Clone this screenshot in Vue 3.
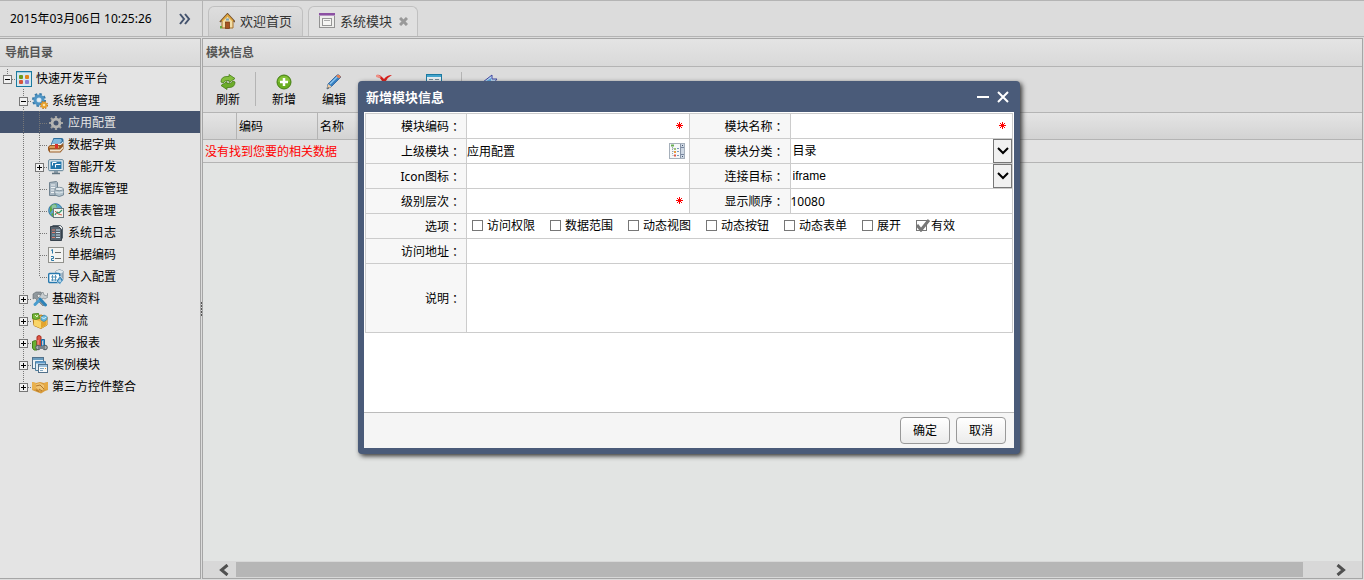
<script setup>
import { ref, reactive } from 'vue'

const now = ref('2015年03月06日 10:25:26')
const activeNode = ref('应用配置')

const nodes = [
  { label: '快速开发平台', level: 0, toggle: 'minus', icon: 'platform' },
  { label: '系统管理', level: 1, toggle: 'minus', icon: 'gears' },
  { label: '应用配置', level: 2, icon: 'gear' },
  { label: '数据字典', level: 2, icon: 'books' },
  { label: '智能开发', level: 2, toggle: 'plus', icon: 'monitor' },
  { label: '数据库管理', level: 2, icon: 'server' },
  { label: '报表管理', level: 2, icon: 'globe' },
  { label: '系统日志', level: 2, icon: 'log' },
  { label: '单据编码', level: 2, icon: 'numbers' },
  { label: '导入配置', level: 2, icon: 'importer', last: true },
  { label: '基础资料', level: 1, toggle: 'plus', icon: 'tools' },
  { label: '工作流', level: 1, toggle: 'plus', icon: 'box' },
  { label: '业务报表', level: 1, toggle: 'plus', icon: 'chart' },
  { label: '案例模块', level: 1, toggle: 'plus', icon: 'windows' },
  { label: '第三方控件整合', level: 1, toggle: 'plus', icon: 'hands', last: true },
]

const tools = [
  { label: '刷新', icon: 'refresh', split: true },
  { label: '新增', icon: 'add' },
  { label: '编辑', icon: 'pencil' },
  { title: '删除', icon: 'remove' },
  { title: '详细', icon: 'detail', split: true },
  { title: '离开', icon: 'back' },
]

const form = reactive({
  code: '',
  name: '',
  parent: '应用配置',
  category: '目录',
  icon: '',
  target: 'iframe',
  level: '',
  sort: '10080',
  url: '',
  remark: '',
})

const options = reactive([
  { label: '访问权限', checked: false },
  { label: '数据范围', checked: false },
  { label: '动态视图', checked: false },
  { label: '动态按钮', checked: false },
  { label: '动态表单', checked: false },
  { label: '展开', checked: false },
  { label: '有效', checked: true },
])

const icons = {
  platform: `<rect x=".5" y=".5" width="15" height="15" fill="#d6e8ef" stroke="#1a7a9f"/><path d="M1 1.500h14" stroke="#9fcbdc"/>
    <rect x="3" y="4" width="4" height="4" rx="1" fill="#6b9a1c"/><rect x="9" y="4" width="4" height="4" rx="1" fill="#e0841c"/>
    <rect x="3" y="9" width="4" height="4" rx="1" fill="#d8553a"/><rect x="9" y="9" width="4" height="4" rx="1" fill="#8a7fd6"/>`,
  gears: `<circle cx="7" cy="7" r="5.8" fill="none" stroke="#3579a8" stroke-width="2.4" stroke-dasharray="2.4 2.1"/>
    <circle cx="7" cy="7" r="4" fill="#c4dcec" stroke="#4e94c4" stroke-width="3"/><circle cx="7" cy="7" r="1.8" fill="#e6eef2"/>
    <circle cx="12" cy="12" r="3.3" fill="none" stroke="#c07a1c" stroke-width="1.6" stroke-dasharray="1.4 1.2"/><circle cx="12" cy="12" r="2.2" fill="#fbe3a8" stroke="#e8a02c" stroke-width="1.8"/>`,
  gear: `<path d="M8 1v14M1 8h14M3 3l10 10M13 3L3 13" stroke="#a2a2a0" stroke-width="2.2"/><circle cx="8" cy="8" r="3.9" fill="#44536e" stroke="#b4b4b2" stroke-width="2.8"/>`,
  books: `<path d="M5.5 1h8q2 0 2 2v3l-3 3h-8L3 7z" fill="#2d6d9c"/><path d="M6 2h7l1 2-2 2H4z" fill="#80b8dd"/><path d="M4 6.5h9l2-2v1.500l-2 2H4z" fill="#f4f4f4"/>
    <path d="M2 8h11l2.500-2v6l-3 3.500H1.500L0 13V10z" fill="#9a5c26"/><path d="M2 9h9v2H1z" fill="#d99b56"/><path d="M2 12.500h10l3-3v2l-3 3H2z" fill="#f1e5d1"/><path d="M7 7h3v5l-1.500-1L7 12z" fill="#d9302c"/>`,
  monitor: `<rect x=".7" y=".7" width="14.600" height="11" rx="1" fill="#e9f1f5" stroke="#5b7e93"/><rect x="2.500" y="2.500" width="11" height="7.500" fill="#2377ac"/>
    <path d="M4.500 6.500v-3h4M7.500 8.500v-3h5" fill="none" stroke="#fff"/><path d="M6 12h4v2H6z" fill="#8a9ca8"/><path d="M4 14.500h8" stroke="#61737f" stroke-width="1.500"/>`,
  server: `<path d="M1.500 1.500l7-1 1 1v13h-8z" fill="#a9b7c2" stroke="#718390"/><path d="M3 4h4M3 6.500h4M3 9h4M3 11.500h3" stroke="#edf1f3"/>
    <path d="M7 8v6q4 3 8.500 0V8z" fill="#b2c2cc" stroke="#798b98"/><ellipse cx="11.200" cy="8" rx="4.200" ry="1.700" fill="#e3eaee" stroke="#8798a3"/><path d="M7 11q4 2 8.500 0" fill="none" stroke="#dce4e9"/>`,
  globe: `<circle cx="7.500" cy="7.500" r="6.800" fill="#5aa7cf" stroke="#32769d"/><path d="M2 4Q4 1 8 1l1 3-4 2-3 4zM5 10l2 4H5l-2-3z" fill="#5fa83d"/><circle cx="6" cy="4" r="2.500" fill="#a9d7e8" opacity=".6"/>
    <rect x="5.500" y="5.500" width="10" height="9" fill="#f2f4ee" stroke="#67797f"/><path d="M7 12l2-3 2 1 3-3" fill="none" stroke="#31986a" stroke-width="1.300"/><path d="M7 8l3 3 4 1" fill="none" stroke="#d35a48"/>`,
  log: `<path d="M2.500 1.500h8l3 3v11h-11z" fill="#58646f" stroke="#36414c"/><path d="M4.500.5h8l2 2v11" fill="none" stroke="#54616b"/><path d="M8 5h4M8 7.500h4M8 10h4M8 12.500h4" stroke="#c8e0ef"/>
    <path d="M4 5h3M4 7.500h3M4 12.500h3" stroke="#d98074"/><path d="M4 10h3" stroke="#80b6d0"/>`,
  numbers: `<rect x=".5" y=".5" width="15" height="15" fill="#f3f3f1" stroke="#92928d"/><path d="M3 3.500l1.500-1v4M3 9.500h2.500v2H3.500v2H6" fill="none" stroke="#2c79a6"/><path d="M7 5.500h6M7 11.500h6" stroke="#696965"/>`,
  importer: `<path d="M8 2v9h7V2q-3.500-2.500-7 0z" fill="#a7bccb" stroke="#74899a"/><ellipse cx="11.500" cy="2.500" rx="3.500" ry="1.500" fill="#e2eaee"/>
    <rect x=".7" y="4.500" width="11" height="9" rx="1" fill="#fff" stroke="#2779ae" stroke-width="1.400"/><path d="M3 8h6M3 11h6M4.500 6v6M7.500 6v6" stroke="#5695bb"/><path d="M8 12l4-5 3.500 4-3.500 4.500z" fill="#2f7fb3" stroke="#fff" stroke-width=".6"/><path d="M10 12h3.500M12 9.500v4" stroke="#d9edf8"/>`,
  tools: `<path d="M1 3l3-2h5l1 2-2 1-2-1-1 2 8 8-2 2-8-8-2 1z" fill="#90989d" stroke="#5e676c" stroke-width=".6"/><path d="M11 1l1 3 3 1 1-3v4l-3 2-2-1-4 4-3-1 5-6V3z" fill="#c8ced1" stroke="#727b80" stroke-width=".6"/>
    <path d="M8 8l5.500 6" stroke="#2e83b8" stroke-width="3" stroke-linecap="round"/><path d="M6.500 10L3 13.500" stroke="#4a9dce" stroke-width="3" stroke-linecap="round"/>`,
  box: `<path d="M1 5l8-3 6 2v8l-6 3.500-7-3z" fill="#edb545" stroke="#b57916"/><path d="M2 6l7 3 6-4v7l-6 3.500-7-3z" fill="#f9d568"/><path d="M9 9v6l5.500-3V6z" fill="#e3a42e"/>
    <path d="M.5 1l6-.5 1 5-4 1-3-1z" fill="#76b637" stroke="#4f8921"/><path d="M3 2l2 2 1-2" fill="none" stroke="#e8f5d2"/><path d="M9 4l3-2 3 1.500v3l-3 2-3-1.500z" fill="#69b8dc" stroke="#3187b3" stroke-width=".7"/><path d="M9.500 4.500l2.500 1 2.500-1.500" fill="none" stroke="#d6f1fc"/>`,
  chart: `<path d="M.5 6.500l3-1 1.500 1V15h-3L.5 13z" fill="#69b033" stroke="#407e1e"/><path d="M5 1.500L7 .5l2 1V13H5z" fill="#e05747" stroke="#a42d21"/><path d="M9.500 4.500h3V12h-3z" fill="#4ba1d8" stroke="#22689a"/>
    <path d="M6 5v6M10.500 6v4" stroke="#ffc8bb" opacity=".8"/><circle cx="6" cy="12.500" r="2.300" fill="#a6adb2" stroke="#50585e"/><circle cx="13" cy="12.500" r="2.300" fill="#a6adb2" stroke="#50585e"/><path d="M6 11h7v3H6z" fill="#778087"/>`,
  windows: `<rect x=".5" y=".5" width="11" height="11" fill="#eef3f6" stroke="#52718b"/><path d="M1 2h10" stroke="#6b9dbf" stroke-width="2"/><path d="M3.500 13.500v-9h10v9z" fill="#e3edf3" stroke="#4f7f9f"/><path d="M4 5.500h9" stroke="#5e9aca" stroke-width="2"/>
    <rect x="6.500" y="7.500" width="9" height="8" fill="#f9fafa" stroke="#52718b"/><path d="M7 9h8" stroke="#9fc1db" stroke-width="2"/><path d="M8 11.500h4M8 13.500h3" stroke="#83a7c0"/><path d="M13 11.500h1" stroke="#e29430"/>`,
  hands: `<path d="M0 3l4 1 4-1 4 1 4-1v8l-3 1-4 2.500L5 13l-5-2z" fill="#d89b3b"/><path d="M0 3l4 1v6l-4 1z" fill="#e9b14e"/><path d="M16 3l-4 1v6l4 1z" fill="#e5a944"/>
    <path d="M4 5l4-1 4 2v4l-3 2-5-3z" fill="#f0c474"/><path d="M4 7l4-1 4 4M4 11l3 1.500M7 10l3 2" fill="none" stroke="#b0762a"/>`,
  home: `<path d="M3 8l5.500-5L14 8v7H3z" fill="#f2dda6" stroke="#a66f29"/><path d="M1 9l7.500-8L16 9" fill="none" stroke="#77532f" stroke-width="1.800"/><path d="M3 8l5.500-6L14 8" fill="none" stroke="#e4aa3b" stroke-width="1.200"/>
    <rect x="6.500" y="9" width="4" height="6.500" fill="#a65221" stroke="#723610" stroke-width=".7"/><rect x="7" y="5.500" width="3" height="2" fill="#7ba5be"/><path d="M1 13h2v2.500H1z" fill="#65a43b"/>`,
  module: `<rect x=".5" y=".5" width="15" height="14" fill="#efefed" stroke="#929292"/><path d="M0 1h16" stroke="#8c50a3" stroke-width="2"/><path d="M0 2.500h16" stroke="#b596c2"/><rect x="3.500" y="5.500" width="9" height="7" fill="#f6f6f4" stroke="#969696"/><path d="M5 7.500h6" stroke="#aaa"/>`,
  refresh: `<path d="M1 8q0-5.500 6-5.500h2V.5l6 4-6 4v-2H7Q4.500 6.500 3 9z" fill="#83be3c" stroke="#467e18" stroke-width=".8"/><path d="M15 8q0 5.500-6 5.500H7v2l-6-4 6-4v2h2q2.500 0 4-2.500z" fill="#6bac29" stroke="#467e18" stroke-width=".8"/>`,
  add: `<circle cx="8" cy="8" r="7" fill="#69ae20" stroke="#458013"/><path d="M2 8a6 6 0 0 1 12 0z" fill="#92cb43" opacity=".7"/><path d="M8 4v8M4 8h8" stroke="#fff" stroke-width="2.500"/>`,
  pencil: `<path d="M2 10l9-9q2-1 4 2l-9.500 9.500L1 15z" fill="#367fc1" stroke="#245d9b" stroke-width=".8"/><path d="M4 10l8.500-8.500" stroke="#8cc5ef" stroke-width="1.500"/><path d="M11 1q2.500-1 4 2l-2 1.500L10 2z" fill="#e08358"/><path d="M2 10l3.500 2.500L1 15z" fill="#f4cda0"/><path d="M1 15l1-2 1 1z" fill="#333"/>`,
  remove: `<path d="M1 1q2-1 5 2l2 2q3-4 8-4-4 2-6 6l5 6-3 1-4-5-4 5-3-1 5-6Q4 3 1 3z" fill="#d81e1a"/><path d="M0 1q3-1 5 2l-1 1-4-1z" fill="#ee9086"/>`,
  detail: `<rect x=".5" y=".5" width="15" height="15" fill="#e7edf0" stroke="#1c79a0"/><path d="M1 2h14" stroke="#42a4cd" stroke-width="2"/><path d="M3 5.500h4M9 5.500h4M3 7.500h4M9 7.500h4M3 10.500h4M9 10.500h4" stroke="#718995"/>`,
  back: `<path d="M1 8l9-7v4h5q-3 2 0 8h-5v3z" fill="#bad8f5" stroke="#4147a0"/><path d="M3 8l6-4v3h4v3H9v3z" fill="#5daae4"/>`,
  picker: `<rect x=".5" y=".5" width="15" height="15" fill="#f6f8fa" stroke="#a6b0bb"/><path d="M11.500 1v14" stroke="#8794a7"/><path d="M12 1h3v14h-3z" fill="#cdd7e3"/><path d="M12 4.500h3M12 11.500h3" stroke="#7988a1"/><path d="M13 2.500h1M13 13.500h1" stroke="#44536d"/>
    <path d="M3.500 4v8M3.500 5.500h2M3.500 8.500h2M3.500 12.500h2" fill="none" stroke="#9ba3aa" stroke-dasharray="1 1"/><path d="M2 2.500h3" stroke="#68ad54" stroke-width="2"/><path d="M5 6h2" stroke="#9cc47c" stroke-width="2"/><path d="M5 12.500h2" stroke="#df594a" stroke-width="2"/><path d="M5 9h2" stroke="#e79a3e" stroke-width="2"/><path d="M8 5.500h2M8 8.500h2M8 12.500h2" stroke="#7998be"/>`,
}
</script>

<template>
  <div class="page">
    <header class="topbar">
      <time class="clock">{{ now }}</time>
      <button class="collapse" aria-label="收起">
        <svg width="12" height="12" viewBox="0 0 12 12"><path d="M1 1l4 5-4 5M6 1l4 5-4 5" fill="none" stroke="#44536e" stroke-width="2" /></svg>
      </button>
      <nav class="tabs">
        <button class="tab">
          <svg width="16" height="16" viewBox="0 0 16 16" v-html="icons.home"></svg>
          <span>欢迎首页</span>
        </button>
        <button class="tab active">
          <svg width="16" height="16" viewBox="0 0 16 16" v-html="icons.module"></svg>
          <span>系统模块</span>
          <svg class="tab-close" width="9" height="9" viewBox="0 0 9 9"><path d="M1 1l7 7M8 1L1 8" stroke="#999" stroke-width="3" /></svg>
        </button>
      </nav>
    </header>

    <div class="main">
      <aside class="sidebar">
        <h2 class="panel-title">导航目录</h2>
        <ul class="tree">
          <li v-for="node in nodes" :key="node.label" class="node" :class="{ selected: node.label === activeNode }" @click="activeNode = node.label">
            <svg v-if="node.level > 0" width="16" height="22"></svg>
            <svg v-if="node.level > 1" width="16" height="22">
              <path class="dots" d="M7.5 0v22" />
            </svg>
            <svg width="16" height="22">
              <path v-if="node.level === 0" class="dots" d="M7.5 2v6" />
              <path v-else class="dots" :d="node.last ? 'M7.5 0v12' : 'M7.5 0v22'" />
              <path class="dots" d="M8 12.500h8" />
              <g v-if="node.toggle" fill="none" shape-rendering="crispEdges">
                <rect x="3.500" y="8.500" width="8" height="8" fill="#f0f0f0" stroke="#777" />
                <path :d="node.toggle === 'plus' ? 'M5 12.500h5M7.500 10v5' : 'M5 12.500h5'" stroke="#000" />
              </g>
            </svg>
            <svg class="node-icon" width="16" height="16" viewBox="0 0 16 16" v-html="icons[node.icon]"></svg>
            <span class="node-label">{{ node.label }}</span>
          </li>
        </ul>
      </aside>

      <div class="splitter">
        <svg width="1" height="14"><path d="M.5 0v14" stroke="#555" stroke-dasharray="2 1" /></svg>
      </div>

      <section class="content">
        <h2 class="panel-title">模块信息</h2>
        <div class="toolbar">
          <template v-for="tool in tools" :key="tool.icon">
            <button class="tool" :title="tool.title">
              <svg width="16" height="16" viewBox="0 0 16 16" v-html="icons[tool.icon]"></svg>
              <span v-if="tool.label">{{ tool.label }}</span>
            </button>
            <span v-if="tool.split" class="split"></span>
          </template>
        </div>
        <table class="grid">
          <thead>
            <tr>
              <th class="col-no"></th>
              <th class="col-code">编码</th>
              <th>名称</th>
            </tr>
          </thead>
          <tbody>
            <tr>
              <td colspan="3">没有找到您要的相关数据</td>
            </tr>
          </tbody>
        </table>
        <div class="scrollbar">
          <button aria-label="向左">
            <svg width="10" height="12" viewBox="0 0 10 12"><path d="M8.500 1l-6 5 6 5" fill="none" stroke="#505050" stroke-width="3" /></svg>
          </button>
          <div class="thumb"></div>
          <button class="to-right" aria-label="向右">
            <svg width="10" height="12" viewBox="0 0 10 12"><path d="M1.500 1l6 5-6 5" fill="none" stroke="#505050" stroke-width="3" /></svg>
          </button>
        </div>
      </section>
    </div>

    <div class="dialog" role="dialog" aria-labelledby="dialog-title">
      <div class="dialog-head">
        <h1 id="dialog-title">新增模块信息</h1>
        <button aria-label="最小化">
          <svg width="12" height="12" viewBox="0 0 12 12"><path d="M0 6h12" stroke="#fff" stroke-width="2" /></svg>
        </button>
        <button aria-label="关闭">
          <svg width="12" height="12" viewBox="0 0 12 12"><path d="M1 1l10 10M11 1L1 11" stroke="#fff" stroke-width="2" /></svg>
        </button>
      </div>

      <form class="dialog-body" @submit.prevent>
        <div class="fields">
          <label for="code">模块编码<i>：</i></label>
          <div class="field">
            <input id="code" v-model="form.code" type="text" />
            <svg class="star" width="7" height="7" viewBox="0 0 7 7"><path d="M3.500 0v7M0 3.500h7M1 1l5 5M6 1L1 6" stroke="#f00" /></svg>
          </div>
          <label for="name">模块名称<i>：</i></label>
          <div class="field">
            <input id="name" v-model="form.name" type="text" />
            <svg class="star" width="7" height="7" viewBox="0 0 7 7"><path d="M3.500 0v7M0 3.500h7M1 1l5 5M6 1L1 6" stroke="#f00" /></svg>
          </div>

          <label for="parent">上级模块<i>：</i></label>
          <div class="field">
            <input id="parent" v-model="form.parent" type="text" />
            <button type="button" class="pick" aria-label="选择">
              <svg width="16" height="16" viewBox="0 0 16 16" v-html="icons.picker"></svg>
            </button>
          </div>
          <label for="category">模块分类<i>：</i></label>
          <div class="field">
            <select id="category" v-model="form.category">
              <option>目录</option>
              <option>页面</option>
            </select>
            <span class="arrow">
              <svg width="12" height="8" viewBox="0 0 12 8"><path d="M1 1l5 5 5-5" fill="none" stroke="#000" stroke-width="2" /></svg>
            </span>
          </div>

          <label for="icon">Icon图标<i>：</i></label>
          <div class="field"><input id="icon" v-model="form.icon" type="text" /></div>
          <label for="target">连接目标<i>：</i></label>
          <div class="field">
            <select id="target" v-model="form.target">
              <option>iframe</option>
              <option>open</option>
            </select>
            <span class="arrow">
              <svg width="12" height="8" viewBox="0 0 12 8"><path d="M1 1l5 5 5-5" fill="none" stroke="#000" stroke-width="2" /></svg>
            </span>
          </div>

          <label for="level">级别层次<i>：</i></label>
          <div class="field">
            <input id="level" v-model="form.level" type="text" />
            <svg class="star" width="7" height="7" viewBox="0 0 7 7"><path d="M3.500 0v7M0 3.500h7M1 1l5 5M6 1L1 6" stroke="#f00" /></svg>
          </div>
          <label for="sort">显示顺序<i>：</i></label>
          <div class="field"><input id="sort" v-model="form.sort" type="text" /></div>

          <div class="caption">选项<i>：</i></div>
          <div class="field wide options">
            <label v-for="option in options" :key="option.label" class="option">
              <input v-model="option.checked" type="checkbox" />
              <svg v-if="option.checked" class="tick" width="15" height="13" viewBox="0 0 15 13"><path d="M1 6l4 5 8-10" fill="none" stroke="#777" stroke-width="3" /></svg>
              <span>{{ option.label }}</span>
            </label>
          </div>

          <label for="url">访问地址<i>：</i></label>
          <div class="field wide"><input id="url" v-model="form.url" type="text" /></div>

          <label for="remark">说明<i>：</i></label>
          <div class="field wide"><textarea id="remark" v-model="form.remark"></textarea></div>
        </div>
      </form>

      <div class="dialog-foot">
        <button>确定</button>
        <button>取消</button>
      </div>
    </div>
  </div>
</template>

<style>
body {
  background: #dcdcdc;
}
</style>

<style scoped>
.page {
  position: relative;
  display: flex;
  flex-direction: column;
  box-sizing: border-box;
  min-height: 100vh;
  padding-bottom: 1px;
  font-family: 'Noto Sans', 'Noto Sans CJK SC', sans-serif;
  font-size: 12px;
  line-height: 16px;
  color: #000;
}

button,
input,
select,
textarea {
  margin: 0;
  padding: 0;
  border: 0;
  border-radius: 0;
  background: none;
  font: inherit;
  color: inherit;
  outline: none;
}

svg {
  display: block;
  flex: none;
}

.topbar {
  display: flex;
  height: 35px;
  border-top: 1px solid #b4b4b4;
  border-bottom: 1px solid #b4b4b4;
  background: #dcdcdc;
}

.clock {
  box-sizing: border-box;
  width: 167px;
  padding: 10px 0 0 10px;
  border-right: 1px solid #b4b4b4;
  white-space: nowrap;
}

.collapse {
  display: flex;
  align-items: center;
  justify-content: center;
  width: 36px;
  border-right: 1px solid #b4b4b4;
}

.tabs {
  display: flex;
  gap: 5px;
  padding: 5px 5px 0;
}

.tab {
  display: flex;
  align-items: center;
  gap: 5px;
  padding: 0 10px 1px;
  border: 1px solid #c0c0c0;
  border-bottom: 0;
  border-radius: 6px 6px 0 0;
  background: linear-gradient(#dedede, #d0d0d0);
  font-size: 13px;
  color: #333;
}

.tab.active {
  padding-right: 9px;
  background: #e0e0e0;
}

.tab-close {
  margin-left: 2px;
}

.main {
  display: flex;
  flex: 1;
  margin-top: 1px;
}

.sidebar {
  width: 200px;
  border: 1px solid #a6a6a6;
  border-left: 0;
  background: #e4e4e4;
}

.panel-title {
  height: 27px;
  margin: 0;
  padding-left: 5px;
  border-bottom: 1px solid #b4b4b4;
  background: linear-gradient(#e4e4e4, #d9d9d9);
  font-size: 12px;
  line-height: 27px;
  color: #555;
}

.content .panel-title {
  padding-left: 3px;
}

.tree {
  margin: 0;
  padding: 0;
  list-style: none;
}

.node {
  display: flex;
  align-items: center;
  height: 22px;
  cursor: pointer;
}

.node.selected {
  background: #44536e;
  color: #e4e4e4;
}

.node-icon {
  margin-top: 2px;
}

.node-label {
  padding-top: 2px;
  margin-left: 4px;
  white-space: nowrap;
}

.dots {
  fill: none;
  stroke: #777;
  stroke-dasharray: 1 1;
}

.splitter {
  display: flex;
  align-items: center;
  width: 1px;
  background: #dcdcdc;
}

.content {
  display: flex;
  flex: 1;
  flex-direction: column;
  min-width: 0;
  margin-right: 1px;
  border: 1px solid #a6a6a6;
  background: #e2e4e3;
}

.toolbar {
  display: flex;
  align-items: flex-start;
  height: 45px;
  border-bottom: 1px solid #b4b4b4;
  background: #dcdcdc;
}

.tool {
  display: flex;
  flex-direction: column;
  align-items: center;
  gap: 2px;
  width: 50px;
  padding-top: 7px;
}

.split {
  width: 1px;
  height: 34px;
  margin: 5px 3px 0 2px;
  background: #b4b4b4;
}

.grid {
  width: 100%;
  border-spacing: 0;
  table-layout: fixed;
}

.grid th {
  height: 24px;
  padding: 2px 2px 0;
  border-bottom: 1px solid #b4b4b4;
  background: linear-gradient(#e4e4e4, #d3d3d3);
  font-weight: normal;
  text-align: left;
}

.grid .col-no {
  width: 29px;
  border-right: 1px solid #b4b4b4;
}

.grid .col-code {
  width: 76px;
  border-right: 1px solid #b4b4b4;
}

.grid td {
  height: 20px;
  padding: 2px 2px 0;
  border-bottom: 1px solid #b4b4b4;
  background: #e3e3e3;
  color: #f00;
}

.scrollbar {
  display: flex;
  height: 17px;
  margin-top: auto;
  background: #d8d8d8;
}

.scrollbar button {
  display: flex;
  align-items: center;
  justify-content: flex-end;
  width: 26px;
  margin-right: 7px;
}

.scrollbar .to-right {
  justify-content: flex-start;
  margin: 0 0 0 33px;
}

.thumb {
  flex: 1;
  margin: 1px 0;
  background: #b6b6b6;
}

.dialog {
  position: absolute;
  top: 81px;
  left: 358px;
  width: 650px;
  padding: 0 6px 6px;
  border-radius: 4px;
  background: #4a5b79;
  box-shadow: 2px 2px 5px #333;
}

.dialog-head {
  display: flex;
  align-items: center;
  gap: 8px;
  height: 31px;
  padding: 0 5px 0 2px;
}

.dialog-head h1 {
  flex: 1;
  margin: 0;
  font-size: 13px;
  line-height: 20px;
  color: #fff;
}

.dialog-body {
  min-height: 299px;
  padding: 1px 1px 0;
  background: #fff;
}

.fields {
  display: grid;
  grid-template-columns: 101px 1fr 101px 1fr;
  grid-template-rows: repeat(6, 25px) 69px;
  border-top: 1px solid #ccc;
  border-left: 1px solid #ccc;
}

.fields > label,
.caption {
  display: flex;
  align-items: center;
  justify-content: flex-end;
  padding: 2px 5px 0 0;
  border-right: 1px solid #ccc;
  border-bottom: 1px solid #ccc;
  background: #f7f7f7;
}

.fields i {
  font-family: 'Noto Sans CJK TC', sans-serif;
  font-style: normal;
}

.field {
  position: relative;
  display: flex;
  align-items: center;
  min-width: 0;
  border-right: 1px solid #ccc;
  border-bottom: 1px solid #ccc;
}

.wide {
  grid-column: span 3;
}

.field input[type='text'],
.field select,
.field textarea {
  flex: 1;
  align-self: stretch;
  min-width: 0;
}

.field input[type='text'] {
  padding-top: 2px;
}

.field textarea {
  resize: none;
}

.field select {
  padding-left: 2px;
  appearance: none;
  font-family: 'Liberation Sans', 'Noto Sans CJK SC', sans-serif;
}

.star {
  margin: 0 6px 1px 0;
}

.pick {
  margin-right: 4px;
}

.arrow {
  position: absolute;
  top: 0;
  right: 0;
  display: flex;
  align-items: center;
  justify-content: center;
  width: 17px;
  height: 22px;
  border: 1px solid #777;
  background: #f1f1f1;
  pointer-events: none;
}

.options {
  gap: 15px;
  padding-left: 5px;
}

.option {
  position: relative;
  display: flex;
  align-items: center;
  gap: 4px;
}

.option input {
  width: 11px;
  height: 11px;
  margin-bottom: 1px;
  border: 1px solid #777;
  background: #fff;
  appearance: none;
}

.tick {
  position: absolute;
  top: 1px;
  left: 0;
}

.dialog-foot {
  display: flex;
  justify-content: flex-end;
  gap: 6px;
  padding: 4px 8px;
  border-top: 1px solid #bbb;
  background: #f5f5f5;
}

.dialog-foot button {
  width: 50px;
  height: 27px;
  border: 1px solid #999;
  border-radius: 4px;
  background: linear-gradient(#fff, #ebebeb);
}
</style>
